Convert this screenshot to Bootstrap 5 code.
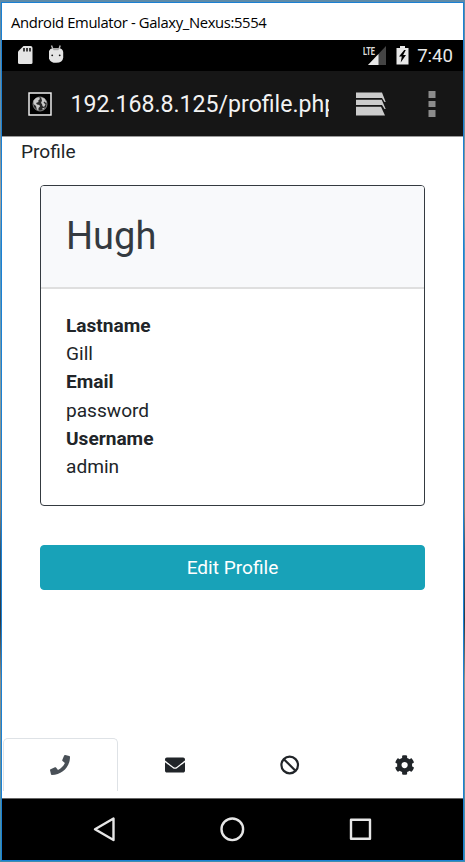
<!DOCTYPE html>
<html lang="en">
<head>
<meta charset="utf-8">
<meta name="viewport" content="width=device-width, initial-scale=1">
<title>Profile</title>
<link href="https://cdn.jsdelivr.net/npm/bootstrap@5.3.0/dist/css/bootstrap.min.css" rel="stylesheet">
<style>
html, body { height: 862px; overflow: hidden; }
body { font-family: Roboto, "Liberation Sans", sans-serif; font-size: 19.1px; line-height: 28.14px; color: #212529; padding: 2px 1px 1px;
  background: linear-gradient(#5f8ba8 0, #6f8d9c 130px, #a9a49a 200px, #4f97c4 250px, #8a9c9c 400px, #857f74 510px, #2f5878 550px, #2d3942 620px, #8f9088 680px, #3f8fae 862px); }
svg { display: block; flex: none; }
.emu-window { height: 859px; border: 1px solid #1a80d4; background: #fff; }
.emu-title { height: 37px; padding-left: 9px; font-family: "Open Sans", "Noto Sans", sans-serif; font-size: 14.8px; line-height: 38px; letter-spacing: -.36px; color: #000; white-space: nowrap; }
.status-bar { height: 31px; padding: 0 10px 0 15px; background: #000; color: #e8e8e8; }
.status-clock { font-size: 18.6px; line-height: 31px; padding-top: 1px; }
.battery-icon { margin-left: 9px; }
.url-bar { height: 66px; padding-left: 26px; background: #161616; border-bottom: 1px solid #9b9b9b; }
.url-text { width: 258px; margin-left: 18.5px; padding-top: 3px; font-size: 23.1px; line-height: 36px; color: #f2f2f2; white-space: nowrap; overflow: hidden; }
.tabs-icon { margin-left: 27px; }
.menu-icon { margin-left: 42.500px; }
.page-view { height: 661px; padding-top: 1px; }
.page-label { padding-left: 19px; }
.profile-card { --bs-card-border-color: #343a40; --bs-card-border-radius: 4px; --bs-card-inner-border-radius: 3px; --bs-card-bg: #fff; margin: 19px 38px 0; height: 321px; }
.profile-head { height: 103px; padding: 25px 25px 0; background: #f8f9fb; border-bottom: 2px solid #dfdfdf; }
.profile-name { font-size: 38px; line-height: 50px; font-weight: 400; color: #343a40; }
.profile-body { padding: 23px 25px; }
.edit-btn { --bs-btn-bg: #18a2b8; --bs-btn-border-color: #18a2b8; --bs-btn-color: #fff; --bs-btn-font-size: 19.1px; --bs-btn-line-height: 28px; --bs-btn-border-radius: 4px; --bs-btn-padding-y: 7.5px; margin: 39px 38px 0; height: 45px; }
.tab-strip { height: 53px; margin: 0 1px 7px; }
.tab-strip .nav-link { --bs-nav-link-color: #212529; color: #212529; height: 53px; border: 1px solid transparent; padding: 0; }
.tab-strip .nav-link.active { color: #495057; background: #fff; border: 1px solid #dee2e6; border-bottom: 0; border-radius: 5px 5px 0 0; }
.system-nav { height: 62px; background: #000; border-top: 1px solid #666; }
</style>
<script src="https://cdn.jsdelivr.net/npm/bootstrap@5.3.0/dist/js/bootstrap.bundle.min.js"></script>
</head>
<body>
<div class="emu-window d-flex flex-column">
  <div class="emu-title">Android Emulator - Galaxy_Nexus:5554</div>
  <div class="status-bar d-flex align-items-center">
    <svg width="16" height="31" viewBox="0 0 16 31"><path fill="#e4e4e4" d="M6.500 6H13.500q2 0 2 2V22.500q0 1.500-1.500 1.500H2.500q-1.500 0-1.500-1.500V11.500z"/><path stroke="#222" stroke-width="1.700" d="M7 8v3.500M10 8v3.500M13 8v3.500"/></svg>
    <svg class="ms-3" width="16" height="31" viewBox="0.800 0 16 31"><path stroke="#bbb" stroke-width="1.400" d="M3.300 5.500 4.500 8.500M12 5.500 11 8.500"/><path fill="#e4e4e4" d="M.6 12Q1 8.500 5 8H10.500Q14.500 8.500 15 12V17.500Q14.500 22.800 8 22.800T.6 17.500z"/><path fill="#aaa" d="M4 8H11.500L10 10.200H5.500z"/><circle cx="4" cy="15.300" r=".9" fill="#111"/><circle cx="11.500" cy="15.300" r=".9" fill="#111"/></svg>
    <svg class="ms-auto" width="24" height="31" viewBox="0 0 24 31"><path fill="#444" d="M23 6V25H5z"/><path fill="#e8e8e8" d="M15.500 14V25H5z"/><text x="0" y="14.500" font-size="11.500" font-weight="700" fill="#ddd" textLength="12" lengthAdjust="spacingAndGlyphs">LTE</text></svg>
    <svg class="battery-icon" width="13" height="31" viewBox="0 0 13 31"><path fill="#e8e8e8" d="M4 6H9V8H12.500V24.500H.5V8H4z"/><path fill="#000" d="M8.200 10 3 16.500H5.800L4.700 22.500 10 15H7.200L9.800 10z"/></svg>
    <span class="status-clock ms-2">7:40</span>
  </div>
  <div class="url-bar d-flex align-items-center">
    <svg width="24" height="24" viewBox="0 0 24 24"><rect width="24" height="24" fill="#000"/><rect x="1" y="1" width="22" height="22" fill="none" stroke="#f0f0f0" stroke-width="1.500"/><circle cx="12" cy="12" r="7" fill="#292929" stroke="#999" stroke-width=".8"/><path fill="#c8c8c8" d="M5.500 8.500 8 6 11 5.300 12 7 10.300 8.500 10.500 10 8 11 9 12.500 11.500 13 12 14.500 10.500 16 10.500 18.500 8.800 17.500 8 14 5.500 12zM13 5.300 16.500 6.600 18.600 10 18 11 16.500 9.600 15.500 10.600 17.500 12.500 16 15 14.500 14 14 12 13 11 14 8.500zM14 16.500 17 15.500 15 18z"/></svg>
    <div class="url-text">192.168.8.125/profile.php</div>
    <svg class="tabs-icon" width="30" height="24" viewBox="0 0 30 24"><path fill="#ccc" d="M0 .5H26L29.700 10H28.500L26 6H0zM0 7.800H25.700L29.700 17H28.500L26 13H0zM0 14.800H25L29 23.500H0z"/></svg>
    <svg class="menu-icon" width="8" height="28" viewBox="0 0 8 28"><path fill="#8c8c8c" d="M.5 1h7v7h-7zM.5 11h7v6h-7zM.5 20h7v7h-7z"/></svg>
  </div>
  <main class="page-view d-flex flex-column">
    <div class="page-label">Profile</div>
    <div class="card profile-card">
      <div class="card-header profile-head"><h2 class="profile-name m-0">Hugh</h2></div>
      <div class="card-body profile-body">
        <div class="fw-bold">Lastname</div><div>Gill</div>
        <div class="fw-bold">Email</div><div>password</div>
        <div class="fw-bold">Username</div><div>admin</div>
      </div>
    </div>
    <button type="button" class="btn edit-btn">Edit Profile</button>
    <nav class="nav nav-fill tab-strip mt-auto">
      <a class="nav-link nav-item active d-flex align-items-center justify-content-center w-25" href="#" aria-label="Calls"><svg width="20" height="20" viewBox="0 0 512 512"><path fill="currentColor" d="M493.400 24.600l-104-24c-11.300-2.600-22.900 3.300-27.500 13.900l-48 112c-4.200 9.800-1.400 21.300 6.900 28l60.600 49.600c-36 76.700-98.900 140.500-177.200 177.200l-49.600-60.600c-6.800-8.300-18.200-11.100-28-6.900l-112 48C3.900 366.500-2 378.100.6 389.400l24 104C27.100 504.200 36.700 512 48 512c256.100 0 464-207.500 464-464 0-11.200-7.700-20.900-18.600-23.400z"/></svg></a>
      <a class="nav-link nav-item d-flex align-items-center justify-content-center w-25" href="#" aria-label="Messages"><svg width="20" height="20" viewBox="0 0 512 512"><path fill="currentColor" d="M502.300 190.800c3.900-3.100 9.700-.2 9.700 4.700V400c0 26.500-21.500 48-48 48H48c-26.500 0-48-21.500-48-48V195.600c0-5 5.700-7.800 9.700-4.700 22.400 17.400 52.100 39.500 154.100 113.600 21.100 15.400 56.700 47.800 92.200 47.600 35.700.3 72-32.800 92.300-47.600 102-74.100 131.600-96.300 154-113.700zM256 320c23.200.4 56.600-29.200 73.400-41.400 132.700-96.300 142.800-104.700 173.400-128.700 5.800-4.500 9.200-11.500 9.200-18.900v-19c0-26.500-21.500-48-48-48H48c-26.500 0-48 21.500-48 48v19c0 7.400 3.400 14.300 9.200 18.900 30.600 23.900 40.700 32.400 173.400 128.700 16.800 12.200 50.200 41.800 73.400 41.400z"/></svg></a>
      <a class="nav-link nav-item d-flex align-items-center justify-content-center w-25" href="#" aria-label="Blocked"><svg width="20" height="20" viewBox="0 0 20 20"><g fill="none" stroke="currentColor" stroke-width="2.200"><circle cx="9.700" cy="10" r="8.300"/><path d="M3.900 4.200 15.500 15.800"/></g></svg></a>
      <a class="nav-link nav-item d-flex align-items-center justify-content-center w-25" href="#" aria-label="Settings"><svg width="20" height="20" viewBox="10 0 512 512"><path fill="currentColor" d="M487.400 315.700l-42.600-24.600c4.300-23.200 4.300-47 0-70.200l42.600-24.600c4.900-2.800 7.100-8.600 5.500-14-11.100-35.600-30-67.800-54.700-94.600-3.800-4.100-10-5.100-14.800-2.300L380.800 110c-17.900-15.400-38.500-27.300-60.800-35.100V25.800c0-5.600-3.900-10.500-9.400-11.700-36.700-8.200-74.300-7.800-109.200 0-5.500 1.200-9.400 6.100-9.400 11.700V75c-22.200 7.900-42.800 19.800-60.800 35.100L88.700 85.500c-4.900-2.800-11-1.900-14.800 2.300-24.700 26.700-43.600 58.900-54.700 94.600-1.700 5.400.6 11.200 5.500 14L67.300 221c-4.300 23.200-4.300 47 0 70.200l-42.600 24.600c-4.900 2.800-7.100 8.600-5.500 14 11.100 35.600 30 67.800 54.700 94.600 3.800 4.100 10 5.100 14.800 2.300l42.600-24.600c17.900 15.400 38.500 27.300 60.800 35.100v49.200c0 5.600 3.900 10.500 9.400 11.700 36.700 8.200 74.300 7.800 109.200 0 5.500-1.200 9.400-6.100 9.400-11.700v-49.200c22.200-7.900 42.800-19.800 60.800-35.100l42.600 24.600c4.900 2.800 11 1.900 14.800-2.300 24.700-26.700 43.600-58.900 54.700-94.600 1.500-5.500-.7-11.300-5.600-14.100zM256 336c-44.100 0-80-35.900-80-80s35.900-80 80-80 80 35.900 80 80-35.900 80-80 80z"/></svg></a>
    </nav>
  </main>
  <div class="system-nav">
    <svg width="461" height="61" viewBox="0 0 461 61"><g fill="none" stroke="#e6e6e6" stroke-width="2.400" stroke-linejoin="round"><path d="M111.500 19.500V41L93 30.300z"/><circle cx="230.300" cy="30.300" r="10.800"/><rect x="349" y="20.700" width="19" height="19"/></g></svg>
  </div>
</div>
</body>
</html>
